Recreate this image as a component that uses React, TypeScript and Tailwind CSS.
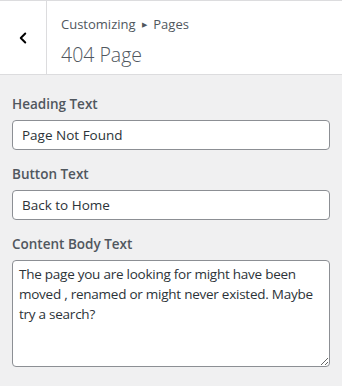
import { ChevronLeft } from "lucide-react";

const font = { fontFamily: '"Open Sans", "Noto Sans", sans-serif' };

function Field({ label, value }: { label: string; value: string }) {
  return (
    <div className="flex flex-col">
      <label className="text-[13.5px] font-semibold text-[#50575e] leading-[20px] mb-[6px]">{label}</label>
      <input
        readOnly
        value={value}
        className="h-[30px] w-full rounded-[4px] border border-[#8c8f94] bg-white px-[9px] text-[13.5px] text-[#2c3338] outline-none"
      />
    </div>
  );
}

export default function App() {
  return (
    <div className="w-[342px] h-[386px] bg-[#f0f0f1] border-t border-[#dcdcde]" style={font}>
      <div className="flex h-[74px] bg-white border-b border-[#dcdcde]">
        <div className="flex w-[47px] items-center justify-center border-r border-[#dcdcde]">
          <ChevronLeft size={18} strokeWidth={2.6} className="text-black" />
        </div>
        <div className="flex flex-col pl-[14px] pt-[14px]">
          <span className="text-[13px] leading-[18px] text-[#50575e]">
            Customizing <span className="text-[7px] align-middle mx-[3px] relative -top-[1px]">▶</span> Pages
          </span>
          <span className="text-[19.5px] font-light leading-[28px] mt-[6px] text-[#50575e]">404 Page</span>
        </div>
      </div>
      <div className="flex flex-col gap-[14px] px-[12px] pt-[19px]">
        <Field label="Heading Text" value="Page Not Found" />
        <Field label="Button Text" value="Back to Home" />
        <div className="flex flex-col">
          <label className="text-[13.5px] font-semibold text-[#50575e] leading-[20px] mb-[6px]">Content Body Text</label>
          <textarea
            readOnly
            value="The page you are looking for might have been moved , renamed or might never existed. Maybe try a search?"
            className="h-[107px] w-full rounded-[4px] border border-[#8c8f94] bg-white px-[6px] py-[3px] text-[13.5px] leading-[20px] tracking-[-0.25px] text-[#2c3338] outline-none"
          />
        </div>
      </div>
    </div>
  );
}
